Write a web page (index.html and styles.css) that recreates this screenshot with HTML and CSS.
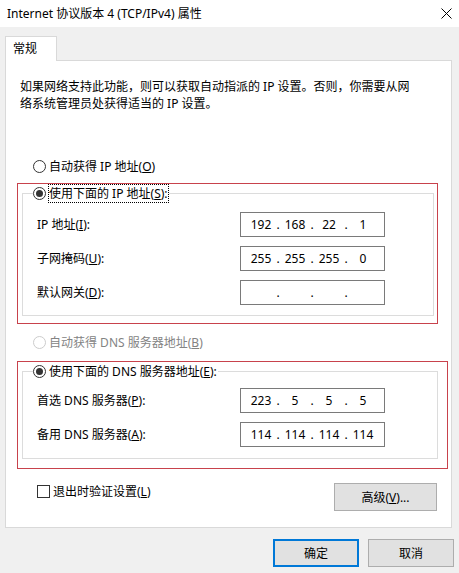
FILE: index.html
```html
<!DOCTYPE html>
<html lang="zh-CN">
<head>
    <meta charset="UTF-8">
    <title>Internet 协议版本 4 (TCP/IPv4) 属性</title>
    <link rel="stylesheet" href="styles.css">
</head>
<body>
    <div id="dialog">
        <!--标题栏-->
        <div class="titlebar">
            <span class="title">Internet 协议版本 4 (TCP/IPv4) 属性</span>
            <svg class="close" width="11" height="11" viewBox="0 0 11 11">
                <path d="M0.5 0.5L10.5 10.5M10.5 0.5L0.5 10.5" stroke="#000" stroke-width="1" fill="none"/>
            </svg>
        </div>
        <!--选项卡-->
        <div class="tabs">
            <div class="tab">常规</div>
        </div>
        <div class="panel">
            <p class="intro">如果网络支持此功能，则可以获取自动指派的 IP 设置。否则，你需要从网<br>络系统管理员处获得适当的 IP 设置。</p>

            <div class="option top"><span class="radio"></span>自动获得 IP 地址(<u>O</u>)</div>

            <!--IP 地址-->
            <div class="mark" id="mark-ip">
                <fieldset class="group">
                    <legend class="option"><span class="radio on"></span><span class="focus">使用下面的 IP 地址(<u>S</u>):</span></legend>
                    <div class="field first">
                        <label>IP 地址(<u>I</u>):</label>
                        <div class="ipbox"><span>192</span><i>.</i><span>168</span><i>.</i><span>22</span><i>.</i><span>1</span></div>
                    </div>
                    <div class="field">
                        <label>子网掩码(<u>U</u>):</label>
                        <div class="ipbox"><span>255</span><i>.</i><span>255</span><i>.</i><span>255</span><i>.</i><span>0</span></div>
                    </div>
                    <div class="field">
                        <label>默认网关(<u>D</u>):</label>
                        <div class="ipbox"><span></span><i>.</i><span></span><i>.</i><span></span><i>.</i><span></span></div>
                    </div>
                </fieldset>
            </div>

            <div class="option disabled"><span class="radio"></span>自动获得 DNS 服务器地址(<u>B</u>)</div>

            <!--DNS-->
            <div class="mark" id="mark-dns">
                <fieldset class="group">
                    <legend class="option"><span class="radio on"></span>使用下面的 DNS 服务器地址(<u>E</u>):</legend>
                    <div class="field first">
                        <label>首选 DNS 服务器(<u>P</u>):</label>
                        <div class="ipbox"><span>223</span><i>.</i><span>5</span><i>.</i><span>5</span><i>.</i><span>5</span></div>
                    </div>
                    <div class="field">
                        <label>备用 DNS 服务器(<u>A</u>):</label>
                        <div class="ipbox"><span>114</span><i>.</i><span>114</span><i>.</i><span>114</span><i>.</i><span>114</span></div>
                    </div>
                </fieldset>
            </div>

            <div class="extra">
                <div class="check"><span class="box"></span>退出时验证设置(<u>L</u>)</div>
                <button class="btn" id="advanced">高级(<u>V</u>)...</button>
            </div>
        </div>
        <!--按钮-->
        <div class="actions">
            <button class="btn default">确定</button>
            <button class="btn">取消</button>
        </div>
    </div>
</body>
</html>
```

FILE: styles.css
```css
*{
    margin: 0;
    padding: 0;
    box-sizing: border-box;
}
body{
    background: #f0f0f0;
    font-family: "Noto Sans", "Noto Sans CJK SC", sans-serif;
    font-size: 12px;
    line-height: 17px;
    color: #000;
}
#dialog{
    width: 459px;
    height: 573px;
}
.titlebar{
    height: 27px;
    background: #fff;
    display: flex;
    align-items: center;
    justify-content: space-between;
    padding: 0 7px;
}
.tabs{
    padding: 9px 0 0 5px;
    display: flex;
}
.tab{
    position: relative;
    width: 52px;
    height: 25px;
    margin-bottom: -1px;
    padding: 3px 0 0 7px;
    background: #fff;
    border: 1px solid #d9d9d9;
    border-bottom: none;
}
.panel{
    height: 468px;
    margin: 0 7px 0 5px;
    padding-top: 17px;
    background: #fff;
    border: 1px solid #d9d9d9;
}
.intro{
    margin-left: 14px;
    white-space: nowrap;
}
.option{
    display: flex;
    align-items: center;
    height: 17px;
    white-space: nowrap;
}
.option.top{
    margin: 46px 0 0 27px;
}
.option.disabled{
    margin: 10px 0 0 27px;
    color: #838383;
}
.radio{
    width: 13px;
    height: 13px;
    margin-right: 3px;
    border: 1px solid #333;
    border-radius: 50%;
    background: #fff;
    display: flex;
    align-items: center;
    justify-content: center;
}
.radio.on::after{
    content: "";
    width: 7px;
    height: 7px;
    border-radius: 50%;
    background: #333;
}
.disabled .radio{
    border-color: #cccccc;
}
.focus{
    display: inline-block;
    height: 17px;
    outline: 1px dotted #000;
}
.mark{
    margin: 8px 0 0 11px;
    border: 1px solid #c8424c;
}
#mark-ip{
    width: 421px;
    padding: 1px 3px 7px 4px;
}
#mark-dns{
    width: 431px;
    margin-top: 10px;
    padding: 1px 9px 9px 4px;
}
.group{
    border: 1px solid #dcdcdc;
    padding: 0 0 10px 0;
    min-width: 0;
}
#mark-dns .group{
    padding-bottom: 11px;
}
.group legend{
    margin-left: 10px;
    padding: 0 1px 0 0;
}
.field{
    display: flex;
    align-items: center;
    height: 25px;
    margin: 9px 0 0 14px;
}
.field.first{
    margin-top: 10px;
}
#mark-dns .field.first{
    margin-top: 8px;
}
.field label{
    width: 203px;
}
.ipbox{
    width: 145px;
    height: 25px;
    padding-left: 8px;
    border: 1px solid #7a7a7a;
    display: flex;
    align-items: center;
}
.ipbox span{
    width: 24px;
    text-align: center;
}
.ipbox i{
    width: 10px;
    font-style: normal;
    text-align: center;
}
.extra{
    display: flex;
    justify-content: space-between;
    align-items: flex-start;
    margin: 14px 14px 0 31px;
}
.check{
    display: flex;
    align-items: center;
    height: 17px;
}
.box{
    width: 13px;
    height: 13px;
    margin-right: 3px;
    border: 1px solid #333;
    background: #fff;
}
.btn{
    height: 28px;
    background: #e1e1e1;
    border: 1px solid #adadad;
    font-family: inherit;
    font-size: 12px;
    color: #000;
}
#advanced{
    width: 103px;
}
.actions{
    display: flex;
    justify-content: flex-end;
    gap: 9px;
    margin-top: 11px;
    padding-right: 5px;
}
.actions .btn{
    width: 86px;
}
.btn.default{
    border: 2px solid #0078d7;
}
```
